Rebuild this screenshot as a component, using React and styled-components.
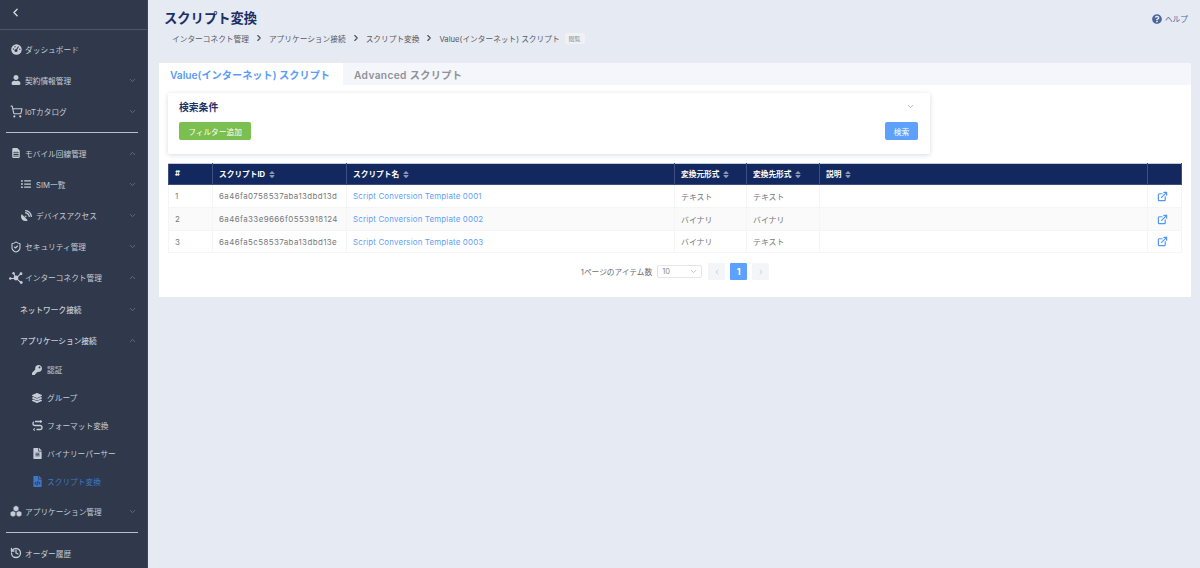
import styled, { createGlobalStyle } from "styled-components";
import { ChevronDown, ChevronUp, ChevronLeft, ChevronRight, ShoppingCart, ShieldCheck, History, ExternalLink } from "lucide-react";
import {
  FaUser,
  FaSimCard,
  FaListUl,
  FaSatelliteDish,
  FaKey,
  FaLayerGroup,
  FaFileAlt,
  FaFileCode,
  FaQuestionCircle,
  FaSort,
} from "react-icons/fa";

const GlobalStyle = createGlobalStyle`
  html, body {
    margin: 0;
    padding: 0;
    height: 100%;
    background: #e6eaf3;
    font-family: Inter, "Noto Sans CJK JP", "Noto Sans", sans-serif;
  }
  * {
    box-sizing: border-box;
  }
`;

const GaugeIcon = () => (
  <svg width="11" height="11" viewBox="0 0 22 22">
    <circle cx="11" cy="11" r="10.5" fill="currentColor" />
    <circle cx="10" cy="13" r="3" fill="#2f394b" />
    <path d="M10 13l5-8" stroke="#2f394b" strokeWidth="2.2" />
    <circle cx="5" cy="10" r="1.3" fill="#2f394b" />
    <circle cx="8" cy="5.5" r="1.3" fill="#2f394b" />
    <circle cx="17.5" cy="10.5" r="1.3" fill="#2f394b" />
  </svg>
);

const InterconnectIcon = () => (
  <svg width="14" height="12" viewBox="0 0 28 24" fill="currentColor">
    <circle cx="14" cy="12" r="4.8" />
    <circle cx="2.6" cy="13" r="2.6" />
    <circle cx="24" cy="3.5" r="2.8" />
    <circle cx="24.5" cy="21" r="2.8" />
    <circle cx="9" cy="2.6" r="2.4" />
    <path d="M3 12h9v2H3zM14.8 10.2l8.4-7.6 1.5 1.4-8.4 7.6zM15.8 12.6l8.6 7.6-1.3 1.6-8.6-7.6zM8.4 3.2l2-.8 4 8.6-2 .8z" />
  </svg>
);

const FormatIcon = () => (
  <svg width="11" height="11" viewBox="0 0 22 22" fill="none" stroke="currentColor" strokeWidth="2.6">
    <path d="M20 3H6C3 3 2 5 2 7s1 4 4 4h10c3 0 4 2 4 4s-1 4-4 4H2" strokeDasharray="14 2 40" />
    <path d="M16 1l3.5 2L16 5M6 17l-3.5 2L6 21" strokeWidth="2" />
  </svg>
);

const CubesIcon = () => (
  <svg width="12" height="12" viewBox="0 0 24 24" fill="currentColor" stroke="#2f394b" strokeWidth="1">
    <path d="M12 1l5.5 3v6.4L12 13.4l-5.5-3V4z" />
    <path d="M6 11.5l5.5 3v6.4L6 23.9l-5.5-3v-6.4z" />
    <path d="M18 11.5l5.5 3v6.4l-5.5 3-5.5-3v-6.4z" />
  </svg>
);

const menu = [
  { label: "ダッシュボード", icon: <GaugeIcon />, level: 0 },
  { label: "契約情報管理", icon: <FaUser size={10} />, level: 0, arrow: "down" },
  { label: "IoTカタログ", icon: <ShoppingCart size={13} />, level: 0, arrow: "down", rule: true },
  { label: "モバイル回線管理", icon: <FaSimCard size={10} />, level: 0, arrow: "up" },
  { label: "SIM一覧", icon: <FaListUl size={10} />, level: 1, arrow: "down" },
  { label: "デバイスアクセス", icon: <FaSatelliteDish size={11} />, level: 1, arrow: "down" },
  { label: "セキュリティ管理", icon: <ShieldCheck size={12} strokeWidth={2.2} />, level: 0, arrow: "down" },
  { label: "インターコネクト管理", icon: <InterconnectIcon />, level: 0, arrow: "up" },
  { label: "ネットワーク接続", level: 2, arrow: "down" },
  { label: "アプリケーション接続", level: 2, arrow: "up" },
  { label: "認証", icon: <FaKey size={10} />, level: 3 },
  { label: "グループ", icon: <FaLayerGroup size={10} />, level: 3 },
  { label: "フォーマット変換", icon: <FormatIcon />, level: 3 },
  { label: "バイナリーパーサー", icon: <FaFileAlt size={11} />, level: 3 },
  { label: "スクリプト変換", icon: <FaFileCode size={11} />, level: 3, active: true },
  { label: "アプリケーション管理", icon: <CubesIcon />, level: 0, arrow: "down", rule: true },
  { label: "オーダー履歴", icon: <History size={12} strokeWidth={2.6} />, level: 0 },
];

const rows = [
  ["1", "6a46fa0758537aba13dbd13d", "Script Conversion Template 0001", "テキスト", "テキスト"],
  ["2", "6a46fa33e9666f0553918124", "Script Conversion Template 0002", "バイナリ", "バイナリ"],
  ["3", "6a46fa5c58537aba13dbd13e", "Script Conversion Template 0003", "バイナリ", "テキスト"],
];

const columns = [
  { label: "#", width: 44 },
  { label: "スクリプトID", width: 134, sort: true },
  { label: "スクリプト名", width: 328, sort: true },
  { label: "変換元形式", width: 72, sort: true },
  { label: "変換先形式", width: 73, sort: true },
  { label: "説明", width: 328, sort: true },
  { label: "", width: 34 },
];

const App = () => {
  return (
    <>
      <GlobalStyle />
      <Page>
        <Sidebar>
          <BackBar>
            <ChevronLeft size={13} strokeWidth={2.4} />
          </BackBar>
          <Menu>
            {menu.map((item) => (
              <div key={item.label}>
                <MenuRow $level={item.level} $active={item.active}>
                  {item.icon && <MenuIcon $level={item.level}>{item.icon}</MenuIcon>}
                  <span>{item.label}</span>
                  {item.arrow && (
                    <MenuArrow>
                      {item.arrow === "up" ? <ChevronUp size={9} /> : <ChevronDown size={9} />}
                    </MenuArrow>
                  )}
                </MenuRow>
                {item.rule && <MenuRule />}
              </div>
            ))}
          </Menu>
        </Sidebar>
        <Main>
          <TitleRow>
            <Title>スクリプト変換</Title>
            <Help>
              <FaQuestionCircle size={10} />
              ヘルプ
            </Help>
          </TitleRow>
          <Breadcrumb>
            <span>インターコネクト管理</span>
            <ChevronRight size={10} strokeWidth={2.6} />
            <span>アプリケーション接続</span>
            <ChevronRight size={10} strokeWidth={2.6} />
            <span>スクリプト変換</span>
            <ChevronRight size={10} strokeWidth={2.6} />
            <span>Value(インターネット) スクリプト</span>
            <ViewBadge>閲覧</ViewBadge>
          </Breadcrumb>
          <Panel>
            <Tabs>
              <Tab $active>Value(インターネット) スクリプト</Tab>
              <Tab>Advanced スクリプト</Tab>
            </Tabs>
            <PanelBody>
              <FilterCard>
                <FilterHead>
                  <FilterTitle>検索条件</FilterTitle>
                  <ChevronDown size={9} color="#9aa0ab" />
                </FilterHead>
                <FilterActions>
                  <Button $color="#7abf4f" $width={72}>フィルター追加</Button>
                  <Button $color="#5da1fb" $width={33}>検索</Button>
                </FilterActions>
              </FilterCard>
              <Table>
                <colgroup>
                  {columns.map((col, i) => (
                    <col key={i} width={col.width} />
                  ))}
                </colgroup>
                <thead>
                  <tr>
                    {columns.map((col, i) => (
                      <HeadCell key={i}>
                        {col.label}
                        {col.sort && <SortIcon />}
                      </HeadCell>
                    ))}
                  </tr>
                </thead>
                <tbody>
                  {rows.map((row) => (
                    <Row key={row[0]}>
                      <Cell>{row[0]}</Cell>
                      <IdCell>{row[1]}</IdCell>
                      <Cell>
                        <NameLink>{row[2]}</NameLink>
                      </Cell>
                      <Cell>{row[3]}</Cell>
                      <Cell>{row[4]}</Cell>
                      <Cell />
                      <ActionCell>
                        <ExternalLink size={11} strokeWidth={2.6} />
                      </ActionCell>
                    </Row>
                  ))}
                </tbody>
              </Table>
              <Pagination>
                <PageLabel>1ページのアイテム数</PageLabel>
                <PageSelect>
                  10
                  <ChevronDown size={9} color="#a8adb6" />
                </PageSelect>
                <PageButton>
                  <ChevronLeft size={8} />
                </PageButton>
                <PageButton $active>1</PageButton>
                <PageButton>
                  <ChevronRight size={8} />
                </PageButton>
              </Pagination>
            </PanelBody>
          </Panel>
        </Main>
      </Page>
    </>
  );
};

const Page = styled.div`
  display: flex;
  height: 568px;
  overflow: hidden;
`;

const Sidebar = styled.aside`
  flex: 0 0 148px;
  background: #2f394b;
  color: #c6ccd6;
  border-right: 1px solid #3c4658;
`;

const BackBar = styled.div`
  height: 30px;
  padding: 0 0 5px 9px;
  display: flex;
  align-items: center;
  color: #d8dce3;
  border-bottom: 1px solid #4d5667;
`;

const Menu = styled.nav`
  padding-top: 3.6px;
`;

const MenuRow = styled.div`
  display: flex;
  align-items: center;
  height: ${(p) => (p.$level === 3 ? "28px" : "31.2px")};
  padding-left: ${(p) => ({ 0: 9, 1: 21, 2: 20, 3: 32 }[p.$level])}px;
  padding-right: 10px;
  font-size: 7.7px;
  font-weight: ${(p) => (p.$level === 2 ? 500 : 400)};
  color: ${(p) => (p.$active ? "#3f76c6" : "#c6ccd6")};
  white-space: nowrap;
`;

const MenuIcon = styled.span`
  display: flex;
  justify-content: ${(p) => (p.$level === 0 ? "center" : "flex-start")};
  flex: 0 0 ${(p) => (p.$level === 0 ? "16px" : "15px")};
  margin-left: ${(p) => (p.$level === 0 ? "-1px" : "0")};
  margin-right: ${(p) => (p.$level === 0 ? "1px" : "0")};
  color: inherit;
`;

const MenuArrow = styled.span`
  margin-left: auto;
  display: flex;
  color: #707a8b;
`;

const MenuRule = styled.div`
  height: 1px;
  margin: 5px 9px 4.4px 6px;
  background: #b9bec8;
`;

const Main = styled.main`
  flex: 1;
  min-width: 0;
  padding: 9px 9px 0 11px;
`;

const TitleRow = styled.div`
  display: flex;
  align-items: center;
  justify-content: space-between;
  padding: 0 3px 0 5px;
`;

const Title = styled.h1`
  margin: 0;
  font-size: 13.3px;
  line-height: 19px;
  font-weight: 700;
  color: #1c3068;
`;

const Help = styled.div`
  display: flex;
  align-items: center;
  gap: 3px;
  font-size: 7.7px;
  color: #4d659e;
`;

const Breadcrumb = styled.div`
  display: flex;
  align-items: center;
  gap: 5px;
  height: 14px;
  margin-top: 3px;
  padding-left: 13px;
  font-size: 7.7px;
  color: #55595f;

  svg {
    color: #4c5058;
  }
`;

const ViewBadge = styled.span`
  padding: 1px 4px;
  font-size: 6px;
  line-height: 9px;
  color: #8a8e95;
  background: #f0f1f3;
  border-radius: 2px;
`;

const Panel = styled.section`
  margin-top: 18px;
  height: 234px;
  background: #fff;
`;

const Tabs = styled.div`
  display: flex;
  height: 22px;
  background: #f4f6fb;
`;

const Tab = styled.div`
  display: flex;
  align-items: center;
  padding: ${(p) => (p.$active ? "0 12px 0 11px" : "0 0 0 11px")};
  width: ${(p) => (p.$active ? "184px" : "auto")};
  font-size: 10.2px;
  letter-spacing: ${(p) => (p.$active ? "0" : "0.35px")};
  font-weight: 600;
  color: ${(p) => (p.$active ? "#5a9cf8" : "#8f9297")};
  background: ${(p) => (p.$active ? "#fff" : "transparent")};
  white-space: nowrap;
`;

const PanelBody = styled.div`
  padding: 8px 9px 0;
`;

const FilterCard = styled.div`
  width: 762px;
  height: 61px;
  padding: 6px 12px 0 11px;
  background: #fff;
  border-radius: 2px;
  box-shadow: 0 1px 5px rgba(40, 50, 80, 0.18);
`;

const FilterHead = styled.div`
  display: flex;
  align-items: center;
  justify-content: space-between;
  height: 15px;
  padding-right: 3px;
`;

const FilterTitle = styled.div`
  font-size: 9.8px;
  font-weight: 700;
  color: #1f3268;
`;

const FilterActions = styled.div`
  display: flex;
  justify-content: space-between;
  margin-top: 8px;
`;

const Button = styled.button`
  width: ${(p) => p.$width}px;
  height: 18px;
  padding: 0;
  border: 0;
  border-radius: 2px;
  background: ${(p) => p.$color};
  color: #fff;
  font-size: 7.7px;
  font-family: Inter, "Noto Sans CJK JP", sans-serif;
`;

const Table = styled.table`
  width: 1013px;
  margin-top: 9px;
  table-layout: fixed;
  border-collapse: collapse;
`;

const HeadCell = styled.th`
  height: 21px;
  padding: 0 6px 1px;
  text-align: left;
  font-size: 7.7px;
  font-weight: 700;
  color: #fff;
  background: #13285f;
  border: 1px solid #3d4f80;
  border-top-color: #c5cbdc;
  white-space: nowrap;
`;

const SortIcon = styled(FaSort)`
  margin-left: 4px;
  width: 6px;
  height: 9px;
  color: #8894b4;
  vertical-align: -2px;
`;

const Row = styled.tr`
  height: 22.8px;
  background: #fff;

  &:nth-child(even) {
    background: #fafafa;
  }
`;

const Cell = styled.td`
  padding: 1px 6px 0;
  font-size: 7.9px;
  color: #75787e;
  border: 1px solid #f4f5f6;
  white-space: nowrap;
`;

const IdCell = styled(Cell)`
  letter-spacing: 0.42px;
`;

const ActionCell = styled(Cell)`
  padding: 3px 0 0 9px;
  color: #4f97f7;
`;

const NameLink = styled.a`
  color: #62a1f7;
  letter-spacing: 0.17px;
`;

const Pagination = styled.div`
  display: flex;
  align-items: center;
  justify-content: center;
  gap: 5px;
  margin-top: 10px;
`;

const PageLabel = styled.span`
  font-size: 7.7px;
  color: #6a6d73;
`;

const PageSelect = styled.div`
  display: flex;
  align-items: center;
  justify-content: space-between;
  width: 45px;
  height: 13px;
  margin-right: 1px;
  padding: 0 3px 0 4px;
  font-size: 7.5px;
  color: #888b92;
  border: 1px solid #e4e6ea;
  border-radius: 2px;
`;

const PageButton = styled.div`
  display: flex;
  align-items: center;
  justify-content: center;
  width: 17px;
  height: 17px;
  font-size: 9px;
  font-weight: 700;
  border-radius: 1px;
  color: ${(p) => (p.$active ? "#fff" : "#b7bbc4")};
  background: ${(p) => (p.$active ? "#5ca1fb" : "#f3f5f9")};
`;

export default App;
